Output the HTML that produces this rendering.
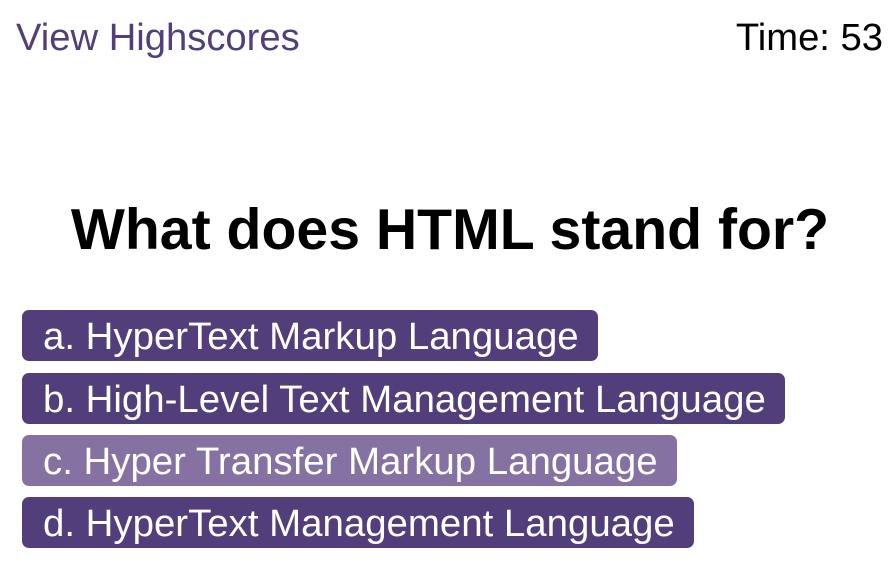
<!DOCTYPE html>
<html><head><style>
body{margin:0;width:888px;height:586px;background:#fff;font-family:"Liberation Sans",Arial,sans-serif;position:relative;overflow:hidden}
.hs{position:absolute;left:16px;top:17px;font-size:38.2px;color:#523e7a;line-height:42px}
.t{position:absolute;right:5px;top:17px;font-size:38.2px;color:#000;line-height:42px}
h1{position:absolute;left:0;width:900px;top:198px;margin:0;text-align:center;font-size:57.2px;font-weight:bold;line-height:64px}
.b{position:absolute;left:22px;height:51px;background:#523e7a;color:#fff;border-radius:7px;font-size:38.4px;line-height:53px;padding:0 0 0 21px;box-sizing:border-box;white-space:nowrap}
</style></head><body>
<div class="hs">View Highscores</div>
<div class="t">Time: 53</div>
<h1>What does HTML stand for?</h1>
<div class="b" style="top:310px;width:576px">a. HyperText Markup Language</div>
<div class="b" style="top:373px;width:763px">b. High-Level Text Management Language</div>
<div class="b" style="top:435px;width:655px;background:#8572a3">c. Hyper Transfer Markup Language</div>
<div class="b" style="top:497px;width:672px">d. HyperText Management Language</div>
</body></html>
